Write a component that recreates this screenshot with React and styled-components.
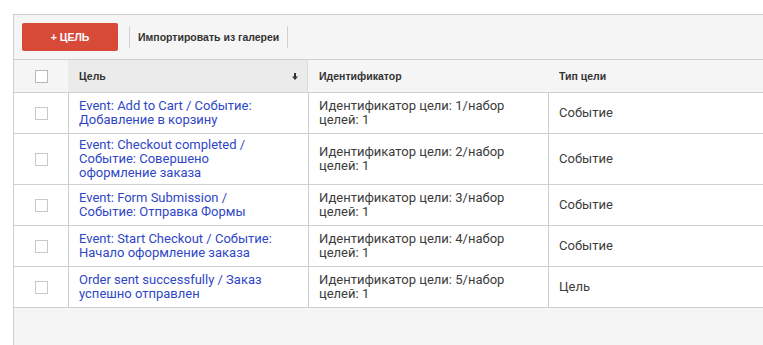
import React from "react";
import styled, { createGlobalStyle } from "styled-components";

const Global = createGlobalStyle`
  html, body { margin: 0; padding: 0; background: #fff; overflow: hidden; }
  body { font-family: Roboto, "Liberation Sans", Arial, sans-serif; }
`;

const Panel = styled.div`
  margin: 14px 0 0 13px;
  border-top: 1px solid #cfcfcf;
  border-left: 1px solid #cfcfcf;
  background: #f5f5f5;
  width: 760px;
`;

const Toolbar = styled.div`
  display: flex;
  align-items: center;
  height: 44px;
  padding: 0 8px;
  box-sizing: border-box;
`;

const PrimaryButton = styled.button`
  width: 96px;
  height: 28px;
  border: none;
  border-radius: 2px;
  background: #d84a38;
  color: #fff;
  font-family: "Liberation Sans", Arial, sans-serif;
  font-weight: bold;
  font-size: 10.5px;
  padding: 0;
  cursor: pointer;
`;

const Sep = styled.div`
  width: 1px;
  height: 22px;
  background: #d0d0d0;
  margin: 0 ${(p) => p.$right}px 0 ${(p) => p.$left}px;
`;

const TextButton = styled.span`
  font-family: "Liberation Sans", Arial, sans-serif;
  font-weight: bold;
  font-size: 10.5px;
  color: #333;
`;

const Grid = styled.div`
  display: grid;
  grid-template-columns: 54px 240px 240px 1fr;
`;

const HeadCell = styled.div`
  height: 34px;
  box-sizing: border-box;
  display: flex;
  align-items: center;
  padding: 0 ${(p) => (p.$sorted ? 9 : 10)}px 0 ${(p) => (p.$sorted ? 11 : 11)}px;
  border-top: 1px solid #cfcfcf;
  border-bottom: 1px solid #cfcfcf;
  border-right: ${(p) => (p.$sorted ? "1px solid #dcdcdc" : "none")};
  background: ${(p) => (p.$sorted ? "#ebebeb" : "#f5f5f5")};
  justify-content: ${(p) => (p.$center ? "center" : "space-between")};
  font-family: "Liberation Sans", Arial, sans-serif;
  font-weight: bold;
  font-size: 10.5px;
  color: #333;
`;

const Cell = styled.div`
  min-height: 41px;
  box-sizing: border-box;
  display: flex;
  align-items: center;
  justify-content: ${(p) => (p.$center ? "center" : "flex-start")};
  padding: 4px ${(p) => p.$padRight ?? 10}px 4px 10px;
  background: #fff;
  border-bottom: 1px solid #cfcfcf;
  border-left: ${(p) => (p.$first ? "none" : "1px solid #cfcfcf")};
  font-size: 13px;
  line-height: 14px;
  color: ${(p) => (p.$link ? "#2f47c6" : "#3c3c3c")};
`;

const Box = styled.span`
  width: 13px;
  height: 13px;
  box-sizing: border-box;
  border: 1px solid ${(p) => (p.$dark ? "#b8b8b8" : "#c8c8c8")};
  background: #fff;
  display: block;
`;

const Footer = styled.div`
  height: 40px;
  background: #f5f5f5;
`;

const SortArrow = () => (
  <svg width="6" height="7" viewBox="0 0 6 7">
    <rect x="2" y="0" width="2" height="4" fill="#333" />
    <polygon points="0,3.5 6,3.5 3,7" fill="#333" />
  </svg>
);

const rows = [
  ["Event: Add to Cart / Событие: Добавление в корзину", "Идентификатор цели: 1/набор целей: 1", "Событие"],
  ["Event: Checkout completed / Событие: Совершено оформление заказа", "Идентификатор цели: 2/набор целей: 1", "Событие"],
  ["Event: Form Submission / Событие: Отправка Формы", "Идентификатор цели: 3/набор целей: 1", "Событие"],
  ["Event: Start Checkout / Событие: Начало оформление заказа", "Идентификатор цели: 4/набор целей: 1", "Событие"],
  ["Order sent successfully / Заказ успешно отправлен", "Идентификатор цели: 5/набор целей: 1", "Цель"],
];

export default function App() {
  return (
    <>
      <Global />
      <Panel>
        <Toolbar>
          <PrimaryButton>+ ЦЕЛЬ</PrimaryButton>
          <Sep $left={11} $right={8} />
          <TextButton>Импортировать из галереи</TextButton>
          <Sep $left={8} $right={0} />
        </Toolbar>
        <Grid>
          <HeadCell $center>
            <Box $dark />
          </HeadCell>
          <HeadCell $sorted>
            <span>Цель</span>
            <SortArrow />
          </HeadCell>
          <HeadCell>Идентификатор</HeadCell>
          <HeadCell>Тип цели</HeadCell>
          {rows.map(([name, id, type], i) => (
            <React.Fragment key={i}>
              <Cell $first $center>
                <Box />
              </Cell>
              <Cell $link $padRight={33}>{name}</Cell>
              <Cell $padRight={30}>{id}</Cell>
              <Cell>{type}</Cell>
            </React.Fragment>
          ))}
        </Grid>
        <Footer />
      </Panel>
    </>
  );
}
